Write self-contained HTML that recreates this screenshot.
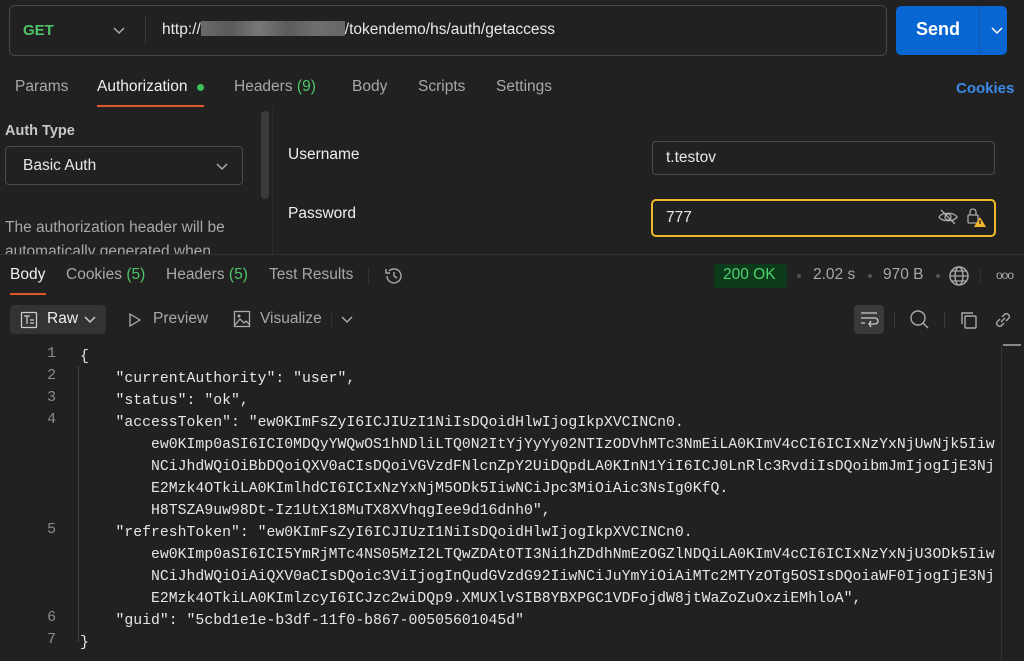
<!DOCTYPE html>
<html><head><meta charset="utf-8"><style>
*{box-sizing:border-box;margin:0;padding:0}
body{width:1024px;height:661px;background:#212121;font-family:"Liberation Sans",sans-serif;color:#d6d6d6;position:relative;overflow:hidden}
.a{position:absolute;white-space:nowrap}
.g{color:#4fc569}
.tab{font-size:15.5px;color:#a8a8a8}
.code{font-family:"Liberation Mono",monospace;font-size:14.8px;color:#e6e6e6}
.ln{position:absolute;left:0;width:56px;text-align:right;font-family:"Liberation Mono",monospace;font-size:14.8px;color:#8c8c8c}
</style></head><body>
<div class="a" style="left:9px;top:5px;width:878px;height:51px;border:1px solid #474747;border-radius:6px"></div>
<div class="a" style="left:23px;top:22px;font-size:15px;font-weight:bold;color:#4fc569">GET</div>
<svg class="a" style="left:112px;top:25px" width="14" height="10"><path d="M2 3l5 5 5-5" stroke="#aaa" stroke-width="1.5" fill="none"/></svg>
<div class="a" style="left:145px;top:16px;width:1px;height:28px;background:#3a3a3a"></div>
<div class="a" style="left:162px;top:21px;font-size:15.5px;color:#e8e8e8">http://<span style="display:inline-block;width:144px;height:15px;vertical-align:-2px;background:linear-gradient(90deg,#6a6a6a,#5a5a5a 20%,#777 40%,#5c5c5c 60%,#6f6f6f 80%,#666)"></span>/tokendemo/hs/auth/getaccess</div>
<div class="a" style="left:896px;top:6px;width:111px;height:49px;background:#0766d1;border-radius:5px"></div>
<div class="a" style="left:979px;top:6px;width:1px;height:49px;background:#0a57b0"></div>
<div class="a" style="left:916px;top:19px;font-size:18px;font-weight:bold;color:#fff">Send</div>
<svg class="a" style="left:990px;top:25px" width="14" height="10"><path d="M2 3l5 5 5-5" stroke="#fff" stroke-width="1.5" fill="none"/></svg>
<div class="a tab" style="left:15px;top:78px">Params</div>
<div class="a tab" style="left:97px;top:78px;color:#f0f0f0">Authorization</div>
<div class="a" style="left:197px;top:84px;width:7px;height:7px;border-radius:50%;background:#3cc15a"></div>
<div class="a" style="left:97px;top:105px;width:107px;height:2px;background:#e0582a"></div>
<div class="a tab" style="left:234px;top:78px">Headers <span class="g">(9)</span></div>
<div class="a tab" style="left:352px;top:78px">Body</div>
<div class="a tab" style="left:418px;top:78px">Scripts</div>
<div class="a tab" style="left:496px;top:78px">Settings</div>
<div class="a" style="left:956px;top:80px;font-size:15px;font-weight:bold;color:#3a8de8">Cookies</div>
<div class="a" style="left:5px;top:123px;font-size:14.5px;font-weight:bold;color:#c8c8c8">Auth Type</div>
<div class="a" style="left:5px;top:146px;width:238px;height:39px;border:1px solid #4a4a4a;border-radius:4px"></div>
<div class="a" style="left:23px;top:157px;font-size:15.5px;color:#e8e8e8">Basic Auth</div>
<svg class="a" style="left:215px;top:161px" width="14" height="10"><path d="M2 3l5 5 5-5" stroke="#aaa" stroke-width="1.5" fill="none"/></svg>
<div class="a" style="left:261px;top:111px;width:8px;height:88px;background:#3b3b3b;border-radius:4px"></div>
<div class="a" style="left:272px;top:107px;width:1px;height:148px;background:#2c2c2c"></div>
<div class="a" style="left:5px;top:216px;font-size:15.5px;color:#a8a8a8;line-height:24px;width:260px;height:38px;overflow:hidden;white-space:normal">The authorization header will be automatically generated when</div>
<div class="a" style="left:288px;top:146px;font-size:15.5px;color:#f0f0f0">Username</div>
<div class="a" style="left:288px;top:205px;font-size:15.5px;color:#f0f0f0">Password</div>
<div class="a" style="left:652px;top:141px;width:343px;height:34px;border:1px solid #4a4a4a;border-radius:4px"></div>
<div class="a" style="left:666px;top:149px;font-size:15.5px;color:#e8e8e8">t.testov</div>
<div class="a" style="left:651px;top:199px;width:345px;height:38px;border:2px solid #f0b92c;border-radius:5px"></div>
<div class="a" style="left:666px;top:209px;font-size:15.5px;color:#e8e8e8">777</div>
<svg class="a" style="left:937px;top:208px" width="22" height="18"><path d="M2 9c3-5 15-5 18 0c-3 5-15 5-18 0z" stroke="#aaa" stroke-width="1.3" fill="none"/><circle cx="11" cy="9" r="3" stroke="#aaa" stroke-width="1.3" fill="none"/><path d="M4 2l14 14" stroke="#aaa" stroke-width="1.3"/></svg>
<svg class="a" style="left:966px;top:207px" width="22" height="22"><rect x="2" y="8" width="10" height="8" rx="1" stroke="#aaa" stroke-width="1.3" fill="none"/><path d="M4 8V5a3 3 0 0 1 6 0v3" stroke="#aaa" stroke-width="1.3" fill="none"/><path d="M14 10l6 10h-12z" fill="#f0b92c"/><path d="M14 13v4" stroke="#222" stroke-width="1.3"/></svg>
<div class="a" style="left:0;top:254px;width:1024px;height:1px;background:#333"></div>
<div class="a tab" style="left:10px;top:266px;color:#f0f0f0">Body</div>
<div class="a" style="left:10px;top:293px;width:36px;height:2px;background:#e0582a"></div>
<div class="a tab" style="left:66px;top:266px">Cookies <span class="g">(5)</span></div>
<div class="a tab" style="left:166px;top:266px">Headers <span class="g">(5)</span></div>
<div class="a tab" style="left:269px;top:266px">Test Results</div>
<div class="a" style="left:368px;top:268px;width:1px;height:16px;background:#333"></div>
<svg class="a" style="left:383px;top:265px" width="22" height="22"><path d="M4 11a7 7 0 1 0 2-5" stroke="#aaa" stroke-width="1.4" fill="none"/><path d="M3 4v4h4" stroke="#aaa" stroke-width="1.4" fill="none"/><path d="M11 7v4l3 2" stroke="#aaa" stroke-width="1.4" fill="none"/></svg>
<div class="a" style="left:714px;top:264px;width:73px;height:24px;background:#0b3b1a;border-radius:3px"></div>
<div class="a" style="left:723px;top:266px;font-size:15.5px;color:#4fd26e">200 OK</div>
<div class="a" style="left:797px;top:274px;width:4px;height:4px;border-radius:50%;background:#555"></div>
<div class="a tab" style="left:813px;top:266px">2.02 s</div>
<div class="a" style="left:868px;top:274px;width:4px;height:4px;border-radius:50%;background:#555"></div>
<div class="a tab" style="left:883px;top:266px">970 B</div>
<div class="a" style="left:936px;top:274px;width:4px;height:4px;border-radius:50%;background:#555"></div>
<svg class="a" style="left:948px;top:265px" width="22" height="22"><circle cx="11" cy="11" r="9" stroke="#aaa" stroke-width="1.4" fill="none"/><ellipse cx="11" cy="11" rx="4" ry="9" stroke="#aaa" stroke-width="1.4" fill="none"/><path d="M2 11h18M4 6h14M4 16h14" stroke="#aaa" stroke-width="1.2"/></svg>
<div class="a" style="left:980px;top:268px;width:1px;height:16px;background:#333"></div>
<div class="a" style="left:996px;top:268px;font-size:12px;color:#aaa;letter-spacing:-1px">ooo</div>
<div class="a" style="left:10px;top:305px;width:96px;height:29px;background:#333;border-radius:4px"></div>
<svg class="a" style="left:20px;top:311px" width="18" height="18"><rect x="1.5" y="1.5" width="15" height="15" rx="1" stroke="#ccc" stroke-width="1.3" fill="none"/><path d="M4 5h6M7 5v8M10 9h4M10 12h4" stroke="#ccc" stroke-width="1.3"/></svg>
<div class="a" style="left:47px;top:310px;font-size:15.5px;color:#f0f0f0">Raw</div>
<svg class="a" style="left:84px;top:315px" width="12" height="9"><path d="M1 2l5 5 5-5" stroke="#ccc" stroke-width="1.5" fill="none"/></svg>
<svg class="a" style="left:128px;top:312px" width="14" height="16"><path d="M2 2l10 6-10 6z" stroke="#aaa" stroke-width="1.3" fill="none"/></svg>
<div class="a tab" style="left:153px;top:310px">Preview</div>
<svg class="a" style="left:233px;top:310px" width="18" height="18"><rect x="1.5" y="1.5" width="15" height="15" stroke="#aaa" stroke-width="1.3" fill="none"/><circle cx="6" cy="6" r="1.5" fill="#aaa"/><path d="M2 15l5-6 4 4 2-2 4 4" stroke="#aaa" stroke-width="1.3" fill="none"/></svg>
<div class="a tab" style="left:260px;top:310px">Visualize</div>
<div class="a" style="left:331px;top:311px;width:1px;height:18px;background:#333"></div>
<svg class="a" style="left:341px;top:315px" width="12" height="9"><path d="M1 2l5 5 5-5" stroke="#aaa" stroke-width="1.5" fill="none"/></svg>
<div class="a" style="left:854px;top:305px;width:30px;height:29px;background:#3a3a3a;border-radius:4px"></div>
<svg class="a" style="left:859px;top:310px" width="20" height="18"><path d="M2 3h16M2 8h14a3 3 0 0 1 0 6h-6M2 13h4" stroke="#ccc" stroke-width="1.3" fill="none"/><path d="M12 11l-2 3 2 3" stroke="#ccc" stroke-width="1.3" fill="none"/></svg>
<div class="a" style="left:894px;top:311px;width:1px;height:16px;background:#3a3a3a"></div>
<svg class="a" style="left:909px;top:309px" width="22" height="22"><circle cx="9" cy="9" r="7" stroke="#aaa" stroke-width="1.4" fill="none"/><path d="M14 14l5 5" stroke="#aaa" stroke-width="1.4"/></svg>
<div class="a" style="left:944px;top:311px;width:1px;height:16px;background:#3a3a3a"></div>
<svg class="a" style="left:959px;top:310px" width="20" height="20"><rect x="6" y="6" width="11" height="12" rx="1" stroke="#aaa" stroke-width="1.4" fill="none"/><path d="M3 14V3h11" stroke="#aaa" stroke-width="1.4" fill="none"/></svg>
<svg class="a" style="left:993px;top:310px" width="20" height="20"><path d="M8 12l4-4M7 9l-3 3a3 3 0 0 0 4 4l3-3M13 11l3-3a3 3 0 0 0-4-4l-3 3" stroke="#aaa" stroke-width="1.4" fill="none"/></svg>
<div class="a" style="left:1001px;top:345px;width:1px;height:316px;background:#333"></div>
<div class="a" style="left:1003px;top:344px;width:18px;height:2px;background:#888"></div>
<div class="a" style="left:78px;top:366px;width:1px;height:276px;background:#444"></div>
<div class="ln" style="top:346px;left:0">1</div>
<div class="ln" style="top:368px">2</div>
<div class="ln" style="top:390px">3</div>
<div class="ln" style="top:412px">4</div>
<div class="ln" style="top:522px">5</div>
<div class="ln" style="top:610px">6</div>
<div class="ln" style="top:632px">7</div>
<div class="a code" style="left:80px;top:346px;line-height:22px">{<br>
&nbsp;&nbsp;&nbsp;&nbsp;"currentAuthority": "user",<br>
&nbsp;&nbsp;&nbsp;&nbsp;"status": "ok",<br>
&nbsp;&nbsp;&nbsp;&nbsp;"accessToken": "ew0KImFsZyI6ICJIUzI1NiIsDQoidHlwIjogIkpXVCINCn0.<br>
&nbsp;&nbsp;&nbsp;&nbsp;&nbsp;&nbsp;&nbsp;&nbsp;ew0KImp0aSI6ICI0MDQyYWQwOS1hNDliLTQ0N2ItYjYyYy02NTIzODVhMTc3NmEiLA0KImV4cCI6ICIxNzYxNjUwNjk5Iiw<br>
&nbsp;&nbsp;&nbsp;&nbsp;&nbsp;&nbsp;&nbsp;&nbsp;NCiJhdWQiOiBbDQoiQXV0aCIsDQoiVGVzdFNlcnZpY2UiDQpdLA0KInN1YiI6ICJ0LnRlc3RvdiIsDQoibmJmIjogIjE3Nj<br>
&nbsp;&nbsp;&nbsp;&nbsp;&nbsp;&nbsp;&nbsp;&nbsp;E2Mzk4OTkiLA0KImlhdCI6ICIxNzYxNjM5ODk5IiwNCiJpc3MiOiAic3NsIg0KfQ.<br>
&nbsp;&nbsp;&nbsp;&nbsp;&nbsp;&nbsp;&nbsp;&nbsp;H8TSZA9uw98Dt-Iz1UtX18MuTX8XVhqgIee9d16dnh0",<br>
&nbsp;&nbsp;&nbsp;&nbsp;"refreshToken": "ew0KImFsZyI6ICJIUzI1NiIsDQoidHlwIjogIkpXVCINCn0.<br>
&nbsp;&nbsp;&nbsp;&nbsp;&nbsp;&nbsp;&nbsp;&nbsp;ew0KImp0aSI6ICI5YmRjMTc4NS05MzI2LTQwZDAtOTI3Ni1hZDdhNmEzOGZlNDQiLA0KImV4cCI6ICIxNzYxNjU3ODk5Iiw<br>
&nbsp;&nbsp;&nbsp;&nbsp;&nbsp;&nbsp;&nbsp;&nbsp;NCiJhdWQiOiAiQXV0aCIsDQoic3ViIjogInQudGVzdG92IiwNCiJuYmYiOiAiMTc2MTYzOTg5OSIsDQoiaWF0IjogIjE3Nj<br>
&nbsp;&nbsp;&nbsp;&nbsp;&nbsp;&nbsp;&nbsp;&nbsp;E2Mzk4OTkiLA0KImlzcyI6ICJzc2wiDQp9.XMUXlvSIB8YBXPGC1VDFojdW8jtWaZoZuOxziEMhloA",<br>
&nbsp;&nbsp;&nbsp;&nbsp;"guid": "5cbd1e1e-b3df-11f0-b867-00505601045d"<br>
}</div>
</body></html>
